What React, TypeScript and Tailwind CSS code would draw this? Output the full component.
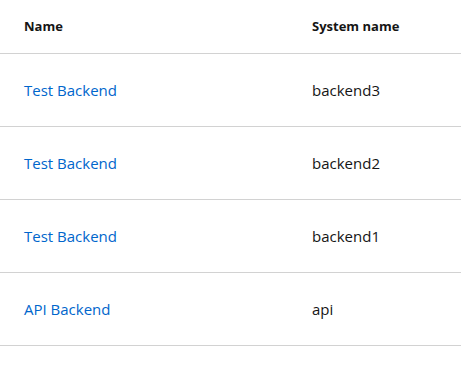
import React from 'react';

type Backend = {
    name: string;
    systemName: string;
};

const backends: Backend[] = [
    { name: 'Test Backend', systemName: 'backend3' },
    { name: 'Test Backend', systemName: 'backend2' },
    { name: 'Test Backend', systemName: 'backend1' },
    { name: 'API Backend', systemName: 'api' },
];

const App: React.FC = () => {
    return (
        <div className="min-h-screen bg-white font-['Open_Sans',sans-serif] text-[#151515]">
            <div className="grid grid-cols-[288px_1fr] h-[54px] items-center border-b border-[#d2d2d2] text-[13px] font-bold">
                <div className="pl-6">Name</div>
                <div className="pl-6">System name</div>
            </div>
            {backends.map((backend) => (
                <div
                    key={backend.systemName}
                    className="grid grid-cols-[288px_1fr] h-[73px] items-center border-b border-[#d2d2d2] text-[15px]"
                >
                    <div className="pl-6">
                        <a href="#" className="text-[#0066cc]">
                            {backend.name}
                        </a>
                    </div>
                    <div className="pl-6">{backend.systemName}</div>
                </div>
            ))}
        </div>
    );
};

export default App;
